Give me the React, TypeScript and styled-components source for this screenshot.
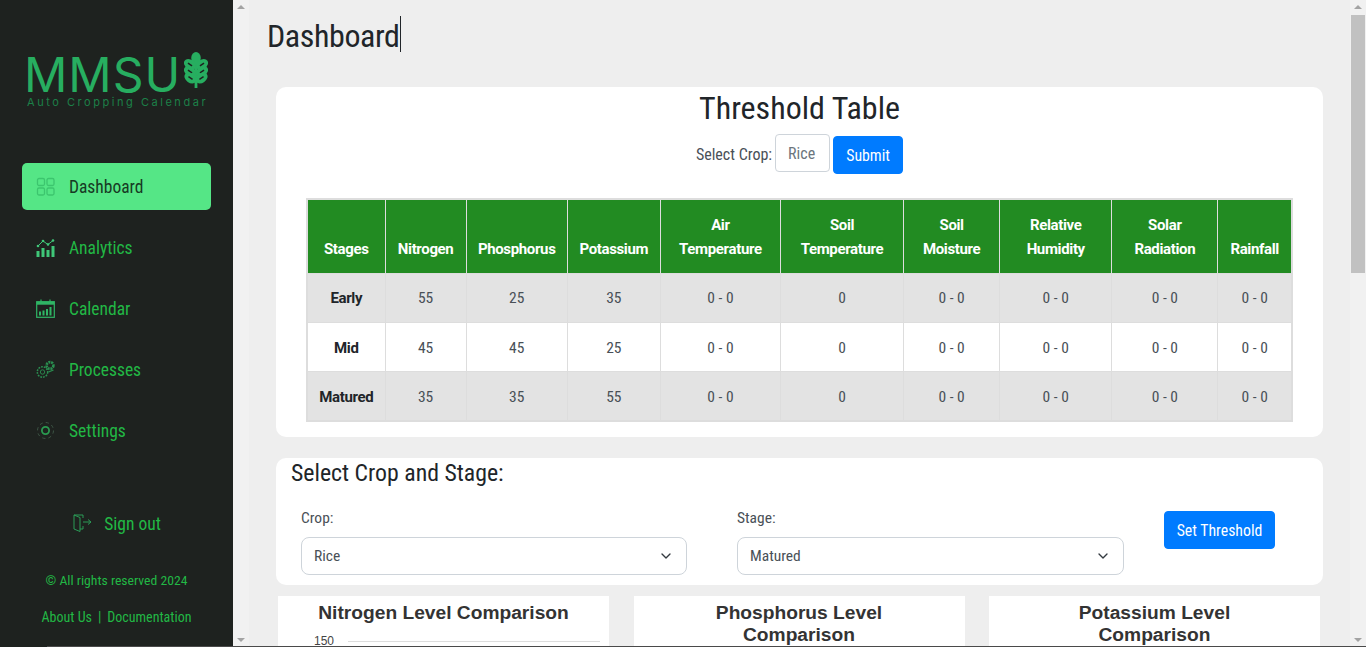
import React from 'react'
import styled, { createGlobalStyle } from 'styled-components'
import { ChevronDown } from 'lucide-react'

const GlobalStyle = createGlobalStyle`
  * { box-sizing: border-box; }
  html, body { margin: 0; padding: 0; height: 100%; overflow: hidden; }
  body { font-family: "Roboto", "Liberation Sans", sans-serif; font-stretch: 85%; background: #eeeeee; }
`

const Shell = styled.div`
  position: relative;
  display: flex;
  height: 647px;
  overflow: hidden;
  background: #eeeeee;
`

// thin dark line along the bottom edge of the capture
const BottomEdge = styled.div`
  position: absolute;
  left: 47px;
  right: 0;
  bottom: 0;
  height: 1px;
  background: #4a4a4a;
`

const Sidebar = styled.aside`
  width: 233px;
  flex-shrink: 0;
  background: #1e221f;
  display: flex;
  flex-direction: column;
  align-items: stretch;
  padding: 52px 22px 0;
`

const LogoBlock = styled.div`
  display: flex;
  flex-direction: column;
  margin-left: 2px;
  height: 111px;
`

const LogoRow = styled.div`
  display: flex;
  align-items: flex-start;
  height: 43px;
  gap: 3px;
`

const LogoText = styled.span`
  font-family: "Inter", sans-serif;
  font-stretch: normal;
  font-size: 48px;
  font-weight: 400;
  line-height: 43px;
  letter-spacing: 1px;
  margin-top: 1px;
  color: #27ae60;
`

const LogoLeaf = styled.svg`
  width: 24px;
  height: 36px;
  flex-shrink: 0;
`

const LogoSub = styled.span`
  font-family: "Inter", sans-serif;
  font-stretch: normal;
  font-size: 11px;
  letter-spacing: 2.54px;
  line-height: 14px;
  margin: 0 0 0 3px;
  white-space: nowrap;
  color: #1c8048;
`

const NavList = styled.nav`
  display: flex;
  flex-direction: column;
  gap: 14px;
`

const NavItem = styled.a<{ $active?: boolean }>`
  display: flex;
  align-items: center;
  gap: 14px;
  height: 47px;
  padding-left: 14px;
  border-radius: 5px;
  font-size: 17.5px;
  color: ${p => (p.$active ? '#173a24' : '#22b845')};
  background: ${p => (p.$active ? '#55e686' : 'transparent')};
`

const NavLabel = styled.span`
  padding-top: 1px;
`

const NavIcon = styled.svg`
  width: 19px;
  height: 19px;
  flex-shrink: 0;
`

const SignOut = styled.a`
  display: flex;
  align-items: center;
  justify-content: center;
  gap: 12px;
  margin-top: 54px;
  height: 30px;
  font-size: 17.5px;
  color: #22b845;
`

const Rights = styled.div`
  margin-top: 34px;
  text-align: center;
  font-size: 13.7px;
  color: #22b845;
`

const FooterLinks = styled.div`
  margin-top: 21px;
  display: flex;
  justify-content: center;
  gap: 6px;
  font-size: 14px;
  color: #22b845;
`

const ScrollStrip = styled.div`
  width: 16px;
  flex-shrink: 0;
  display: flex;
  flex-direction: column;
  align-items: center;
  background: #f1f1f1;
  padding: 5px 0;
`

const ArrowUp = styled.div`
  width: 0;
  height: 0;
  border-left: 4px solid transparent;
  border-right: 4px solid transparent;
  border-bottom: 4px solid #a3a3a3;
`

const ArrowDown = styled.div`
  width: 0;
  height: 0;
  border-left: 4px solid transparent;
  border-right: 4px solid transparent;
  border-top: 4px solid #a3a3a3;
  margin-top: auto;
`

const Thumb = styled.div`
  width: 14px;
  height: 258px;
  margin-top: 6px;
  background: #c1c1c1;
`

const Main = styled.main`
  flex: 1;
  min-width: 0;
  overflow: hidden;
  padding: 0 27px 0 18px;
`

const PageTitle = styled.h1`
  display: inline-block;
  margin: 16px 0 35px;
  height: 36px;
  font-size: 32px;
  font-weight: 400;
  letter-spacing: -0.4px;
  line-height: 40px;
  color: #212529;
  border-right: 1px solid #212529;
`

const Card = styled.section`
  margin-left: 9px;
  background: #ffffff;
  border-radius: 10px;
`

const ThresholdCard = styled(Card)`
  height: 350px;
  padding: 0 30px;
`

const CardTitle = styled.h2`
  margin: 0;
  padding-top: 2px;
  text-align: center;
  font-size: 32px;
  font-weight: 400;
  line-height: 38px;
  color: #212529;
`

const CropRow = styled.div`
  display: flex;
  justify-content: center;
  align-items: center;
  gap: 3px;
  margin-top: 7px;
  font-size: 16px;
  color: #495057;
`

const CropLabel = styled.span`
  padding-top: 2px;
`

const CropChip = styled.span`
  display: flex;
  align-items: center;
  justify-content: center;
  width: 55px;
  height: 38px;
  padding: 1px 2px 0 0;
  border: 1px solid #ced4da;
  border-radius: 4px;
  color: #6c757d;
`

const BlueButton = styled.button<{ $w: number }>`
  width: ${p => p.$w}px;
  height: 38px;
  border: 1px solid #007bff;
  border-radius: 4px;
  background: #007bff;
  color: #ffffff;
  font-family: inherit;
  font-stretch: 85%;
  font-size: 15.8px;
`

const SubmitButton = styled(BlueButton)`
  position: relative;
  top: 2px;
`

const Table = styled.table`
  width: 987px;
  margin-top: 26px;
  table-layout: fixed;
  border-collapse: collapse;
  border: 2px solid #dddddd;
  font-size: 15.5px;
`

const HeadCell = styled.th<{ $w: number }>`
  width: ${p => p.$w}px;
  height: 74px;
  padding: 0 2px 12px;
  vertical-align: bottom;
  text-align: center;
  background: #228b22;
  color: #ffffff;
  font-size: 15px;
  font-stretch: 89%;
  font-weight: 700;
  letter-spacing: -0.35px;
  line-height: 24px;
  border: 1px solid #dddddd;
`

const Row = styled.tr<{ $shade?: boolean }>`
  background: ${p => (p.$shade ? '#e3e3e3' : '#ffffff')};
`

const Cell = styled.td`
  height: 49.4px;
  padding: 1px 0 0;
  text-align: center;
  color: #495057;
  border: 1px solid #dddddd;
`

const StageCell = styled(Cell)`
  font-size: 15px;
  font-stretch: 89%;
  font-weight: 700;
  letter-spacing: -0.35px;
  color: #212529;
`

const StageCard = styled(Card)`
  margin-top: 21px;
  height: 127px;
  padding: 0 48px 0 15px;
`

const StageTitle = styled.h3`
  margin: 0;
  font-size: 23.8px;
  font-weight: 400;
  line-height: 30px;
  color: #212529;
`

const StageForm = styled.div`
  display: flex;
  margin-top: 18px;
  padding-left: 10px;
  gap: 50px;
`

const Field = styled.div<{ $w: number }>`
  width: ${p => p.$w}px;
  display: flex;
  flex-direction: column;
`

const FieldLabel = styled.label`
  height: 31px;
  font-size: 15.5px;
  line-height: 24px;
  color: #495057;
`

const FakeSelect = styled.div`
  display: flex;
  align-items: center;
  justify-content: space-between;
  height: 38px;
  padding: 0 12px;
  border: 1px solid #ced4da;
  border-radius: 8px;
  font-size: 15.5px;
  color: #495057;
`

const SetButton = styled(BlueButton)`
  margin: 5px 0 0 -10px;
`

const ChartRow = styled.div`
  display: flex;
  gap: 24.5px;
  margin: 11px 0 0 11px;
`

const ChartCard = styled.div`
  width: 331px;
  height: 300px;
  flex-shrink: 0;
  background: #ffffff;
  padding: 6px 30px 0;
`

const ChartTitle = styled.div`
  font-family: "Liberation Sans", sans-serif;
  font-stretch: normal;
  font-size: 19.2px;
  font-weight: 700;
  line-height: 22.4px;
  text-align: center;
  color: #333333;
`

const AxisRow = styled.div`
  display: flex;
  align-items: center;
  gap: 14px;
  margin: 10px -21px 0 6px;
  font-family: "Liberation Sans", sans-serif;
  font-stretch: normal;
  font-size: 12px;
  color: #444444;
`

const GridLine = styled.div`
  flex: 1;
  height: 1px;
  background: #dddddd;
`

const navIcons: Record<string, React.ReactNode> = {
  Dashboard: (
    <g fill="none" stroke="#3cc56e" strokeWidth="1.3">
      <rect x="1.5" y="1.5" width="7" height="7" rx="1.5" />
      <rect x="11" y="1.5" width="7" height="7" rx="1.5" />
      <rect x="1.5" y="11" width="7" height="7" rx="1.5" />
      <rect x="11" y="11" width="7" height="7" rx="1.5" />
    </g>
  ),
  Analytics: (
    <g>
      <g fill="#3fc778">
        <rect x="0.5" y="13" width="3" height="6" />
        <rect x="5.5" y="10" width="3" height="9" />
        <rect x="10.5" y="12" width="3" height="7" />
        <rect x="15.5" y="8" width="3" height="11" />
      </g>
      <path d="M2 8 L7 3 L12 6.5 L17 2.5" fill="none" stroke="#3fc778" strokeWidth="1" />
      <circle cx="2" cy="8" r="1.3" fill="#3fc778" />
      <circle cx="7" cy="3" r="1.3" fill="#3fc778" />
      <circle cx="12" cy="6.5" r="1.3" fill="#3fc778" />
      <circle cx="17" cy="2.5" r="1.3" fill="#3fc778" />
    </g>
  ),
  Calendar: (
    <g>
      <rect x="0.7" y="2.7" width="17.6" height="15.6" fill="none" stroke="#2fb565" strokeWidth="1.2" />
      <rect x="0.7" y="2.7" width="17.6" height="3" fill="#2fb565" />
      <path d="M5 0.5V4M14 0.5V4" stroke="#2fb565" strokeWidth="1.2" />
      <g fill="#2fb565">
        <rect x="3" y="12.5" width="2" height="4" />
        <rect x="6.5" y="11.5" width="2" height="5" />
        <rect x="10" y="10" width="2" height="6.5" />
        <rect x="13.5" y="8" width="2" height="8.5" />
      </g>
    </g>
  ),
  Processes: (
    <g fill="none" stroke="#2a8f50">
      <circle cx="6.5" cy="12" r="5.2" strokeWidth="1.5" strokeDasharray="1.8 1" />
      <circle cx="6.5" cy="12" r="2.2" strokeWidth="0.9" />
      <circle cx="14" cy="5.5" r="3.4" strokeWidth="2.6" strokeDasharray="2 0.8" />
      <path d="M12.5 12 L17.5 10" strokeWidth="1.2" />
    </g>
  ),
  Settings: (
    <g fill="none">
      <circle cx="9.5" cy="9.5" r="3.6" stroke="#2a9a50" strokeWidth="1.8" />
      <circle cx="9.5" cy="9.5" r="8" stroke="#3f5a48" strokeWidth="0.9" strokeDasharray="3.2 3.08" />
    </g>
  ),
}

const navItems = ['Dashboard', 'Analytics', 'Calendar', 'Processes', 'Settings']

const columns: [string[], number][] = [
  [['Stages'], 78],
  [['Nitrogen'], 81],
  [['Phosphorus'], 101],
  [['Potassium'], 93],
  [['Air', 'Temperature'], 120],
  [['Soil', 'Temperature'], 123],
  [['Soil', 'Moisture'], 96],
  [['Relative', 'Humidity'], 112],
  [['Solar', 'Radiation'], 106],
  [['Rainfall'], 74],
]

const rows = [
  { stage: 'Early', n: 55, p: 25, k: 35 },
  { stage: 'Mid', n: 45, p: 45, k: 25 },
  { stage: 'Matured', n: 35, p: 35, k: 55 },
]

const charts = [
  ['Nitrogen Level Comparison'],
  ['Phosphorus Level', 'Comparison'],
  ['Potassium Level', 'Comparison'],
]

const leafLobes = [
  [6, 12.5, 35], [18, 12.5, -35],
  [6, 19.5, 35], [18, 19.5, -35],
  [6.5, 26, 35], [17.5, 26, -35],
]

export default function App() {
  return (
    <Shell>
      <GlobalStyle />
      <Sidebar>
        <LogoBlock>
          <LogoRow>
            <LogoText>MMSU</LogoText>
            <LogoLeaf viewBox="0 0 24 36">
              <ellipse cx="12" cy="6" rx="4.8" ry="6" fill="#27ae60" />
              <rect x="10.6" y="8" width="2.8" height="28" fill="#27ae60" />
              {leafLobes.map(([x, y, r]) => (
                <g key={`${x}-${y}`} transform={`rotate(${r} ${x} ${y})`}>
                  <ellipse cx={x} cy={y} rx="6.6" ry="4.8" fill="#27ae60" />
                  <path d={`M${x - 2.5} ${y}H${x + 2.5}`} stroke="#1e221f" strokeWidth="1.4" />
                </g>
              ))}
            </LogoLeaf>
          </LogoRow>
          <LogoSub>Auto Cropping Calendar</LogoSub>
        </LogoBlock>
        <NavList>
          {navItems.map((name, i) => (
            <NavItem key={name} $active={i === 0}>
              <NavIcon viewBox="0 0 19 19">{navIcons[name]}</NavIcon>
              <NavLabel>{name}</NavLabel>
            </NavItem>
          ))}
        </NavList>
        <SignOut>
          <svg width="20" height="20" viewBox="0 0 20 20" fill="none" stroke="#2a9a56" strokeWidth="1">
            <path d="M11 5V2H2V16L8 18.5V4.5L2 2M8 16H11V13" />
            <path d="M11 9H19M16 6.5L19 9L16 11.5" />
          </svg>
          <NavLabel>Sign out</NavLabel>
        </SignOut>
        <Rights>© All rights reserved 2024</Rights>
        <FooterLinks>
          <span>About Us</span>
          <span>|</span>
          <span>Documentation</span>
        </FooterLinks>
      </Sidebar>
      <ScrollStrip>
        <ArrowUp />
        <ArrowDown />
      </ScrollStrip>
      <Main>
        <PageTitle>Dashboard</PageTitle>
        <ThresholdCard>
          <CardTitle>Threshold Table</CardTitle>
          <CropRow>
            <CropLabel>Select Crop:</CropLabel>
            <CropChip>Rice</CropChip>
            <SubmitButton $w={70}>Submit</SubmitButton>
          </CropRow>
          <Table>
            <thead>
              <tr>
                {columns.map(([lines, w]) => (
                  <HeadCell key={lines.join(' ')} $w={w}>
                    {lines.map(l => <div key={l}>{l}</div>)}
                  </HeadCell>
                ))}
              </tr>
            </thead>
            <tbody>
              {rows.map((r, i) => (
                <Row key={r.stage} $shade={i !== 1}>
                  <StageCell>{r.stage}</StageCell>
                  <Cell>{r.n}</Cell>
                  <Cell>{r.p}</Cell>
                  <Cell>{r.k}</Cell>
                  <Cell>0 - 0</Cell>
                  <Cell>0</Cell>
                  <Cell>0 - 0</Cell>
                  <Cell>0 - 0</Cell>
                  <Cell>0 - 0</Cell>
                  <Cell>0 - 0</Cell>
                </Row>
              ))}
            </tbody>
          </Table>
        </ThresholdCard>
        <StageCard>
          <StageTitle>Select Crop and Stage:</StageTitle>
          <StageForm>
            <Field $w={386}>
              <FieldLabel>Crop:</FieldLabel>
              <FakeSelect>Rice<ChevronDown size={16} color="#343a40" /></FakeSelect>
            </Field>
            <Field $w={387}>
              <FieldLabel>Stage:</FieldLabel>
              <FakeSelect>Matured<ChevronDown size={16} color="#343a40" /></FakeSelect>
            </Field>
            <SetButton $w={111}>Set Threshold</SetButton>
          </StageForm>
        </StageCard>
        <ChartRow>
          {charts.map((lines, i) => (
            <ChartCard key={lines[0]}>
              {lines.map(l => <ChartTitle key={l}>{l}</ChartTitle>)}
              {i === 0 && (
                <AxisRow>150<GridLine /></AxisRow>
              )}
            </ChartCard>
          ))}
        </ChartRow>
      </Main>
      <ScrollStrip>
        <ArrowUp />
        <Thumb />
        <ArrowDown />
      </ScrollStrip>
      <BottomEdge />
    </Shell>
  )
}
